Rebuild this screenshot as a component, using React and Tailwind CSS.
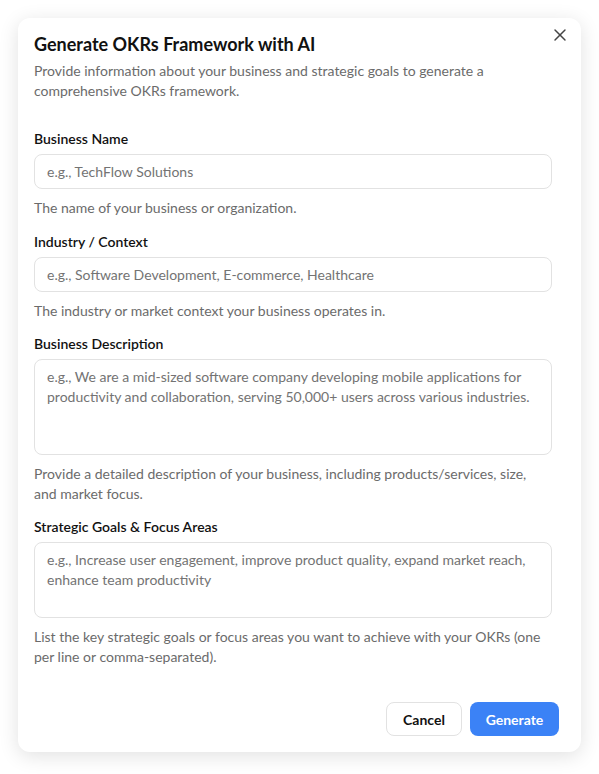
import { X } from 'lucide-react'

/* ───────── Form fields ───────── */

const fields = [
  {
    id: 'name',
    label: 'Business Name',
    placeholder: 'e.g., TechFlow Solutions',
    help: 'The name of your business or organization.',
  },
  {
    id: 'industry',
    label: 'Industry / Context',
    placeholder: 'e.g., Software Development, E-commerce, Healthcare',
    help: 'The industry or market context your business operates in.',
  },
  {
    id: 'description',
    label: 'Business Description',
    placeholder:
      'e.g., We are a mid-sized software company developing mobile applications for productivity and collaboration, serving 50,000+ users across various industries.',
    help: 'Provide a detailed description of your business, including products/services, size, and market focus.',
    rows: 'h-[96px]',
  },
  {
    id: 'goals',
    label: 'Strategic Goals & Focus Areas',
    placeholder:
      'e.g., Increase user engagement, improve product quality, expand market reach, enhance team productivity',
    help: 'List the key strategic goals or focus areas you want to achieve with your OKRs (one per line or comma-separated).',
    rows: 'h-[76px]',
  },
]

function Field({ field }) {
  return (
    <div className="flex flex-col">
      <label htmlFor={field.id} className="text-[14px] font-semibold text-[#111] leading-5 mb-[5px]">
        {field.label}
      </label>
      {field.rows ? (
        <textarea
          id={field.id}
          placeholder={field.placeholder}
          className={`${field.rows} w-full resize-none rounded-lg border border-[#e2e2e2] bg-white px-3 py-[7px] text-[14px] leading-5 text-[#111] placeholder:text-[#737373] outline-none`}
        />
      ) : (
        <input
          id={field.id}
          placeholder={field.placeholder}
          className="h-[35px] w-full rounded-lg border border-[#e2e2e2] bg-white px-3 text-[14px] text-[#111] placeholder:text-[#737373] outline-none"
        />
      )}
      <p className="mt-[9px] text-[14px] leading-[19.5px] text-[#6b6b6b]">{field.help}</p>
    </div>
  )
}

export default function App() {
  return (
    <div
      className="min-h-[774px] bg-white p-[18px]"
      style={{ fontFamily: 'Lato, "Noto Sans", sans-serif' }}
    >
      <div className="relative flex h-[734px] w-[563px] flex-col rounded-xl bg-white shadow-[0_4px_20px_rgba(0,0,0,0.12)]">
        <button className="absolute right-[7px] top-[3px] p-1 text-[#444]">
          <X className="h-5 w-5" strokeWidth={1.75} />
        </button>

        <div className="pl-4 pr-[40px] pt-[12px]">
          <h2 className="text-[18px] font-bold leading-7 text-[#111]">Generate OKRs Framework with AI</h2>
          <p className="mt-[3px] text-[14px] leading-5 text-[#6b6b6b]">
            Provide information about your business and strategic goals to generate a comprehensive OKRs framework.
          </p>
        </div>

        <div className="mt-[28px] flex flex-col gap-[14px] pl-4 pr-[29px]">
          {fields.map((f) => (
            <Field key={f.id} field={f} />
          ))}
        </div>

        <div className="mt-auto flex justify-end gap-2 pb-4 pr-[22px]">
          <button className="h-[34px] w-[76px] rounded-lg border border-[#e2e2e2] bg-white text-[14px] font-bold text-[#111]">
            Cancel
          </button>
          <button className="h-[34px] w-[89px] rounded-lg bg-[#3b82f6] text-[14px] font-bold text-white">
            Generate
          </button>
        </div>
      </div>
    </div>
  )
}
